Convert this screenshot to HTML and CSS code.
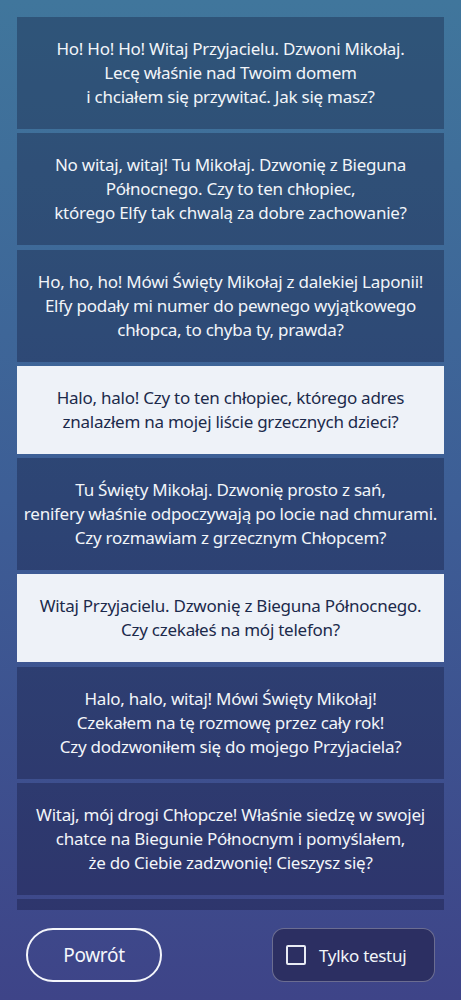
FILE: index.html
```html
<!DOCTYPE html>
<html lang="pl">
<head>
    <meta charset="UTF-8">
    <meta name="viewport" content="width=device-width, initial-scale=1.0">
    <title>Wybierz powitanie</title>
    <link rel="stylesheet" href="styles.css">
</head>
<body>
<div class="screen">
    <div class="greetings">
        <div class="greeting">Ho! Ho! Ho! Witaj Przyjacielu. Dzwoni Mikołaj.<br>Lecę właśnie nad Twoim domem<br>i chciałem się przywitać. Jak się masz?</div>
        <div class="greeting">No witaj, witaj! Tu Mikołaj. Dzwonię z Bieguna<br>Północnego. Czy to ten chłopiec,<br>którego Elfy tak chwalą za dobre zachowanie?</div>
        <div class="greeting">Ho, ho, ho! Mówi Święty Mikołaj z dalekiej Laponii!<br>Elfy podały mi numer do pewnego wyjątkowego<br>chłopca, to chyba ty, prawda?</div>
        <div class="greeting selected">Halo, halo! Czy to ten chłopiec, którego adres<br>znalazłem na mojej liście grzecznych dzieci?</div>
        <div class="greeting">Tu Święty Mikołaj. Dzwonię prosto z sań,<br>renifery właśnie odpoczywają po locie nad chmurami.<br>Czy rozmawiam z grzecznym Chłopcem?</div>
        <div class="greeting selected">Witaj Przyjacielu. Dzwonię z Bieguna Północnego.<br>Czy czekałeś na mój telefon?</div>
        <div class="greeting">Halo, halo, witaj! Mówi Święty Mikołaj!<br>Czekałem na tę rozmowę przez cały rok!<br>Czy dodzwoniłem się do mojego Przyjaciela?</div>
        <div class="greeting">Witaj, mój drogi Chłopcze! Właśnie siedzę w swojej<br>chatce na Biegunie Północnym i pomyślałem,<br>że do Ciebie zadzwonię! Cieszysz się?</div>
        <div class="greeting empty"></div>
    </div>
    <div class="footer">
        <button class="back-btn">Powrót</button>
        <label class="test-btn">
            <span class="box"></span>
            Tylko testuj
        </label>
    </div>
</div>
</body>
</html>
```

FILE: styles.css
```css
body {
    margin: 0;
    font-family: "Noto Sans", "Open Sans", sans-serif;
    color: #f2f5f9;
}
.screen {
    width: 461px;
    height: 1000px;
    display: flex;
    flex-direction: column;
    background: linear-gradient(to bottom, #40769c 0%, #3d5e96 50%, #3e4488 100%);
}
.greetings {
    height: 893px;
    margin: 17px 17px 0;
    overflow: hidden;
    display: flex;
    flex-direction: column;
    gap: 4.25px;
}
.greeting {
    flex-shrink: 0;
    padding: 20px 6px;
    background-color: rgba(10, 10, 40, 0.3);
    font-size: 17px;
    line-height: 24px;
    letter-spacing: -0.25px;
    text-align: center;
}
.greeting.selected {
    background-color: #eef2f8;
    color: #1c2a4b;
}
.greeting.empty {
    height: 72px;
}
.footer {
    flex: 1;
    display: flex;
    justify-content: space-between;
    align-items: flex-start;
    padding: 18px 26px 0;
}
.back-btn {
    width: 136px;
    height: 54px;
    border: 2px solid #f4f6fb;
    border-radius: 27px;
    background: transparent;
    color: #f4f6fb;
    font-family: inherit;
    font-size: 19px;
    letter-spacing: -0.3px;
}
.test-btn {
    width: 163px;
    height: 54px;
    box-sizing: border-box;
    display: flex;
    align-items: center;
    gap: 13px;
    padding-left: 13px;
    border: 1px solid rgba(255, 255, 255, 0.3);
    border-radius: 12px;
    background-color: #2c2f62;
    font-size: 17px;
    letter-spacing: -0.3px;
}
.box {
    width: 16px;
    height: 16px;
    border: 2px solid #e8ebf4;
    border-radius: 2px;
}
```
